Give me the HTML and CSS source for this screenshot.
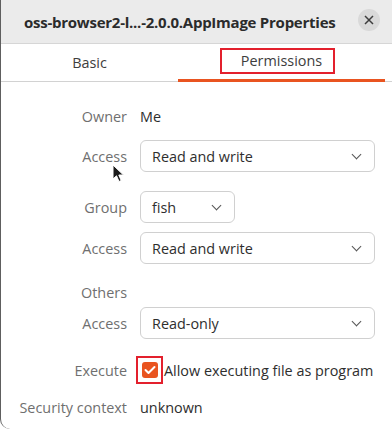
FILE: index.html
```html
<!DOCTYPE html>
<html lang="en">
<head>
    <meta charset="UTF-8">
    <title>oss-browser2 Properties</title>
    <link rel="stylesheet" href="styles.css">
</head>
<body>

    <div class="window">
        <!-- Title bar -->
        <div class="titlebar">
            <span class="title">oss-browser2-l...-2.0.0.AppImage Properties</span>
            <button class="close-btn" aria-label="Close">
                <svg width="10" height="10" viewBox="0 0 10 10">
                    <path d="M1 1 L9 9 M9 1 L1 9" stroke="#3d3d3d" stroke-width="1.5" fill="none"/>
                </svg>
            </button>
        </div>

        <!-- Tabs -->
        <div class="tabs">
            <div class="tab tab-basic">Basic</div>
            <div class="tab tab-perm active"><span class="marked">Permissions</span></div>
        </div>

        <!-- Permissions form -->
        <div class="form">
            <div class="row row-owner">
                <span class="label">Owner</span>
                <span class="value">Me</span>
            </div>
            <div class="row row-access1">
                <span class="label">Access</span>
                <div class="combo wide">Read and write<span class="chevron"></span></div>
            </div>
            <div class="row row-group">
                <span class="label">Group</span>
                <div class="combo narrow">fish<span class="chevron"></span></div>
            </div>
            <div class="row row-access2">
                <span class="label">Access</span>
                <div class="combo wide">Read and write<span class="chevron"></span></div>
            </div>
            <div class="row row-others">
                <span class="label">Others</span>
                <span></span>
            </div>
            <div class="row row-access3">
                <span class="label">Access</span>
                <div class="combo wide">Read-only<span class="chevron"></span></div>
            </div>
            <div class="row row-exec">
                <span class="label">Execute</span>
                <label class="check">
                    <span class="check-ring"><span class="check-box">
                        <svg width="12" height="10" viewBox="0 0 12 10">
                            <path d="M1.5 5 L4.5 8 L10.5 2" stroke="#fff" stroke-width="2" fill="none" stroke-linecap="round" stroke-linejoin="round"/>
                        </svg>
                    </span></span>
                    <span class="value">Allow executing file as program</span>
                </label>
            </div>
            <div class="row row-security">
                <span class="label">Security context</span>
                <span class="value">unknown</span>
            </div>
        </div>

        <!-- Mouse pointer over the dialog -->
        <svg class="cursor" width="13" height="19" viewBox="0 0 13 19">
            <path d="M1 1 L1 15 L4.5 11.8 L7 17.5 L9.2 16.5 L6.8 11 L11.5 11 Z" fill="#1a1a1a" stroke="#fff" stroke-width="1"/>
        </svg>
    </div>

</body>
</html>
```

FILE: styles.css
```css
/* General Styles */
body {
    margin: 0;
    padding: 0;
    background: #ffffff;
    font-family: 'Open Sans', 'Noto Sans', sans-serif;
    font-size: 14.4px;
    color: #2e2e2e;
}

.window {
    position: relative;
    width: 391px;
    height: 429px;
    border-left: 1px solid #5e5e5e;
    border-bottom-left-radius: 10px;
    background: #ffffff;
    overflow: hidden;
}

/* Title bar */
.titlebar {
    height: 43px;
    display: flex;
    align-items: center;
    justify-content: space-between;
    padding: 0 12px 0 23px;
    background: #ebebeb;
    border-bottom: 1px solid #d6d6d6;
}

.title {
    font-size: 15px;
    font-weight: 700;
    color: #2b2b2b;
    letter-spacing: -0.25px;
}

.close-btn {
    width: 22px;
    height: 22px;
    margin-top: -3px;
    border: none;
    border-radius: 50%;
    background: #d9d9d9;
    display: flex;
    align-items: center;
    justify-content: center;
    padding: 0;
}

/* Tabs */
.tabs {
    display: flex;
    height: 37px;
    border-bottom: 1px solid #d2d2d2;
}

.tab {
    display: flex;
    align-items: center;
    justify-content: center;
    color: #3d3d3d;
}

.tab-basic {
    width: 177px;
}

.tab-perm {
    width: 207px;
}

.tab.active {
    border-bottom: 3px solid #e95420;
    margin-bottom: -1px;
    padding-top: 1px;
}

.marked {
    display: inline-block;
    height: 22px;
    line-height: 22px;
    padding: 0 11px 0 19px;
    border: 2px solid #e3202d;
    margin: -3px 0 0 -8px;
}

/* Form */
.form {
    display: flex;
    flex-direction: column;
    padding: 24px 17px 0 0;
}

.row {
    display: grid;
    grid-template-columns: 126px 1fr;
    column-gap: 13px;
    align-items: center;
    min-height: 20px;
}

.label {
    text-align: right;
    color: #6f6f6f;
}

.value {
    color: #2e2e2e;
}

.row-access1 { margin-top: 14px; }
.row-group   { margin-top: 19px; }
.row-access2 { margin-top: 9px; }
.row-others  { margin-top: 18px; }
.row-access3 { margin-top: 5px; }
.row-exec    { margin-top: 17px; }
.row-security { margin-top: 13px; }

/* Combo boxes */
.combo {
    position: relative;
    height: 32px;
    box-sizing: border-box;
    border: 1px solid #d0d0d0;
    border-radius: 6px;
    padding: 0 12px 0 11px;
    display: flex;
    align-items: center;
    color: #2e2e2e;
}

.combo.narrow {
    width: 95px;
}

.chevron {
    margin-left: auto;
    width: 6px;
    height: 6px;
    border-right: 1.3px solid #555;
    border-bottom: 1.3px solid #555;
    transform: rotate(45deg);
    margin-top: -4px;
    margin-right: 2px;
}

/* Checkbox */
.check {
    display: flex;
    align-items: center;
    margin-left: -4px;
}

.check-ring {
    width: 23px;
    height: 24px;
    border: 2px solid #e3202d;
    display: flex;
    align-items: center;
    justify-content: center;
    margin-right: 1px;
}

.check-box {
    width: 16px;
    height: 16px;
    border-radius: 3px;
    background: #e95420;
    display: flex;
    align-items: center;
    justify-content: center;
}

/* Mouse pointer */
.cursor {
    position: absolute;
    left: 111px;
    top: 164px;
}
```
